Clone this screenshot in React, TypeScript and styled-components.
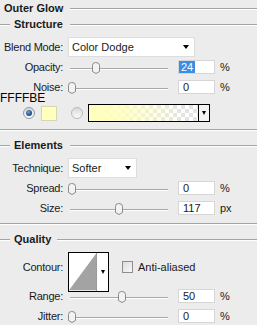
import React from 'react';
import styled, { createGlobalStyle } from 'styled-components';

const GlobalStyle = createGlobalStyle`
  html, body {
    margin: 0;
    padding: 0;
    background: #ececec;
  }
  body {
    font-family: 'Liberation Sans', Arial, sans-serif;
    font-size: 11px;
    color: #1a1a1a;
  }
`;

const Panel = styled.div`
  position: relative;
  width: 257px;
  height: 325px;
  overflow: hidden;
  background: #ececec;
`;

const Rule = styled.div`
  flex: 1;
  height: 1px;
  background: #a4a4a4;
  box-shadow: 0 1px 0 #ffffff;
`;

const LeadRule = styled(Rule)`
  flex: none;
  width: 10px;
`;

const TitleRow = styled.div`
  display: flex;
  align-items: center;
  height: 16px;
  padding-left: 4px;
  gap: 7px;
  font-weight: 700;
`;

const Group = styled.section<{ $first?: boolean }>`
  margin-top: ${({ $first }) => ($first ? 0 : 7)}px;
`;

const GroupHeader = styled.div<{ $gap: number }>`
  display: flex;
  align-items: center;
  height: 16px;

  & > span {
    font-weight: 700;
    margin: 0 ${({ $gap }) => $gap}px 0 4px;
  }
`;

const GroupBody = styled.div<{ $bottom: number }>`
  padding: 5px 0 ${({ $bottom }) => $bottom}px;
`;

const Divider = styled.div`
  height: 1px;
  background: #a4a4a4;
  box-shadow: 0 1px 0 #ffffff;
`;

const Row = styled.div`
  display: flex;
  align-items: center;
  height: 20px;
`;

const Label = styled.div`
  width: 63px;
  flex: none;
  text-align: right;
  letter-spacing: -0.25px;
`;

const Caret = styled.span<{ $w?: number }>`
  width: 0;
  height: 0;
  border-left: ${({ $w = 7 }) => $w / 2}px solid transparent;
  border-right: ${({ $w = 7 }) => $w / 2}px solid transparent;
  border-top: 4px solid #000;
`;

const Select = styled.div<{ $w: number }>`
  margin-left: 5px;
  width: ${({ $w }) => $w}px;
  height: 20px;
  box-sizing: border-box;
  flex: none;
  display: flex;
  align-items: center;
  justify-content: space-between;
  padding: 0 5px 0 3px;
  background: #fff;
  border: 1px solid #dddddd;
`;

const SliderBox = styled.div`
  position: relative;
  margin-left: 4px;
  width: 109px;
  height: 14px;
  flex: none;
`;

const Track = styled.div`
  position: absolute;
  left: 3px;
  width: 98px;
  top: 8px;
  height: 1px;
  background: #a8a8a8;
  box-shadow: 0 1px 0 #ffffff;
`;

const ThumbSvg = styled.svg`
  position: absolute;
  top: 2px;
`;

const NumField = styled.div`
  margin-left: 2px;
  width: 37px;
  height: 14px;
  box-sizing: border-box;
  flex: none;
  padding-left: 4px;
  background: #fff;
  border: 1px solid #d6d6d6;
  line-height: 12px;
`;

const Selected = styled.span`
  display: inline-block;
  margin-left: -4px;
  padding: 0 2px;
  height: 12px;
  background: #3a8ee6;
  color: #fff;
`;

const Unit = styled.span`
  margin-left: 5px;
`;

const ColorRow = styled.div`
  display: flex;
  align-items: center;
  height: 20px;
  margin-top: 6px;
  padding-left: 23px;
`;

const Radio = styled.span<{ $on?: boolean }>`
  position: relative;
  width: 12px;
  height: 12px;
  box-sizing: border-box;
  flex: none;
  border-radius: 50%;
  border: 1px solid ${({ $on }) => ($on ? '#8b9aa8' : '#b9b9b9')};
  background: linear-gradient(#d9d9d9, #fbfbfb);

  &::after {
    content: '';
    display: ${({ $on }) => ($on ? 'block' : 'none')};
    position: absolute;
    left: 2px;
    top: 2px;
    width: 6px;
    height: 6px;
    border-radius: 50%;
    background: radial-gradient(circle at 40% 35%, #6aa6d8, #173f6e 75%);
  }
`;

const Swatch = styled.span`
  margin-left: 6px;
  width: 16px;
  height: 15px;
  box-sizing: border-box;
  flex: none;
  background: #ffffbe;
  border: 1px solid #d6d6b4;
`;

const GradientPicker = styled.div`
  margin-left: 5px;
  width: 122px;
  height: 18px;
  box-sizing: border-box;
  flex: none;
  display: flex;
  border: 1px solid #000;
`;

const GradientFill = styled.div`
  flex: 1;
  background:
    linear-gradient(to right, #ffffbe 0%, rgba(255, 255, 190, 0.85) 30%, rgba(255, 255, 190, 0) 85%),
    repeating-conic-gradient(#e4e4e4 0 25%, #ffffff 0 50%) 0 0 / 8px 8px;
`;

const PickerButton = styled.div`
  width: 10px;
  flex: none;
  display: flex;
  align-items: center;
  justify-content: center;
  background: #f4f4f4;
  border-left: 1px solid #000;
`;

const ContourRow = styled.div`
  display: flex;
  align-items: flex-start;

  & > ${Label} {
    margin-top: 9px;
  }
`;

const ContourBox = styled.div`
  margin: 0 0 -6px 5px;
  width: 41px;
  height: 40px;
  box-sizing: border-box;
  flex: none;
  display: flex;
  background: #fff;
  border: 1px solid #000;
`;

const ContourButton = styled.div`
  width: 11px;
  flex: none;
  display: flex;
  align-items: center;
  justify-content: center;
  border-left: 1px solid #9a9a9a;
`;

const Check = styled.span`
  margin: 9px 0 0 13px;
  width: 11px;
  height: 12px;
  box-sizing: border-box;
  flex: none;
  border: 1px solid #8e8e8e;
  background: linear-gradient(135deg, #dcdcdc, #f8f8f8);
`;

const CheckLabel = styled.span`
  margin: 9px 0 0 5px;
  line-height: 13px;
`;

const Annotation = styled.div`
  position: absolute;
  left: 0;
  top: 92px;
  font-family: 'Liberation Sans', Arial, sans-serif;
  font-size: 12px;
  line-height: 12px;
  color: #000;
`;

const Thumb = ({ value }: { value: number }) => (
  <ThumbSvg width="10" height="12" viewBox="0 0 10 12" style={{ left: Math.round(value * 100) }}>
    <path
      d="M1.5 3.5 Q1.5 0.5 4.5 0.5 L5 0.5 Q8.5 0.5 8.5 3.5 L8.5 9.5 L5 11.5 L1.5 9.5 Z"
      fill="#f3f3f3"
      stroke="#8a8a8a"
    />
  </ThumbSvg>
);

interface SliderRowProps {
  label: string;
  value: number;
  text: React.ReactNode;
  unit: string;
}

const SliderRow = ({ label, value, text, unit }: SliderRowProps) => (
  <Row>
    <Label>{label}</Label>
    <SliderBox>
      <Track />
      <Thumb value={value} />
    </SliderBox>
    <NumField>{text}</NumField>
    <Unit>{unit}</Unit>
  </Row>
);

export default function App() {
  return (
    <Panel>
      <GlobalStyle />
      <TitleRow>
        <span>Outer Glow</span>
        <Rule />
      </TitleRow>

      <Group $first>
        <GroupHeader $gap={7}>
          <LeadRule />
          <span>Structure</span>
          <Rule />
        </GroupHeader>
        <GroupBody $bottom={6}>
          <Row>
            <Label>Blend Mode:</Label>
            <Select $w={127}>
              <span>Color Dodge</span>
              <Caret />
            </Select>
          </Row>
          <SliderRow label="Opacity:" value={0.24} text={<Selected>24</Selected>} unit="%" />
          <SliderRow label="Noise:" value={0} text="0" unit="%" />
          <ColorRow>
            <Radio $on />
            <Swatch />
            <Radio style={{ marginLeft: 14 }} />
            <GradientPicker>
              <GradientFill />
              <PickerButton>
                <Caret $w={5} />
              </PickerButton>
            </GradientPicker>
          </ColorRow>
        </GroupBody>
        <Divider />
      </Group>

      <Group>
        <GroupHeader $gap={7}>
          <LeadRule />
          <span>Elements</span>
          <Rule />
        </GroupHeader>
        <GroupBody $bottom={5}>
          <Row>
            <Label>Technique:</Label>
            <Select $w={69}>
              <span>Softer</span>
              <Caret />
            </Select>
          </Row>
          <SliderRow label="Spread:" value={0} text="0" unit="%" />
          <SliderRow label="Size:" value={117 / 250} text="117" unit="px" />
        </GroupBody>
        <Divider />
      </Group>

      <Group>
        <GroupHeader $gap={6}>
          <LeadRule />
          <span>Quality</span>
          <Rule />
        </GroupHeader>
        <GroupBody $bottom={0}>
          <ContourRow>
            <Label>Contour:</Label>
            <ContourBox>
              <svg width="28" height="38" viewBox="0 0 28 38">
                <polygon points="0,38 28,0 28,38" fill="#a3a3a3" />
              </svg>
              <ContourButton>
                <Caret $w={5} />
              </ContourButton>
            </ContourBox>
            <Check />
            <CheckLabel>Anti-aliased</CheckLabel>
          </ContourRow>
          <SliderRow label="Range:" value={0.5} text="50" unit="%" />
          <SliderRow label="Jitter:" value={0} text="0" unit="%" />
        </GroupBody>
      </Group>

      <Annotation>FFFFBE</Annotation>
    </Panel>
  );
}
